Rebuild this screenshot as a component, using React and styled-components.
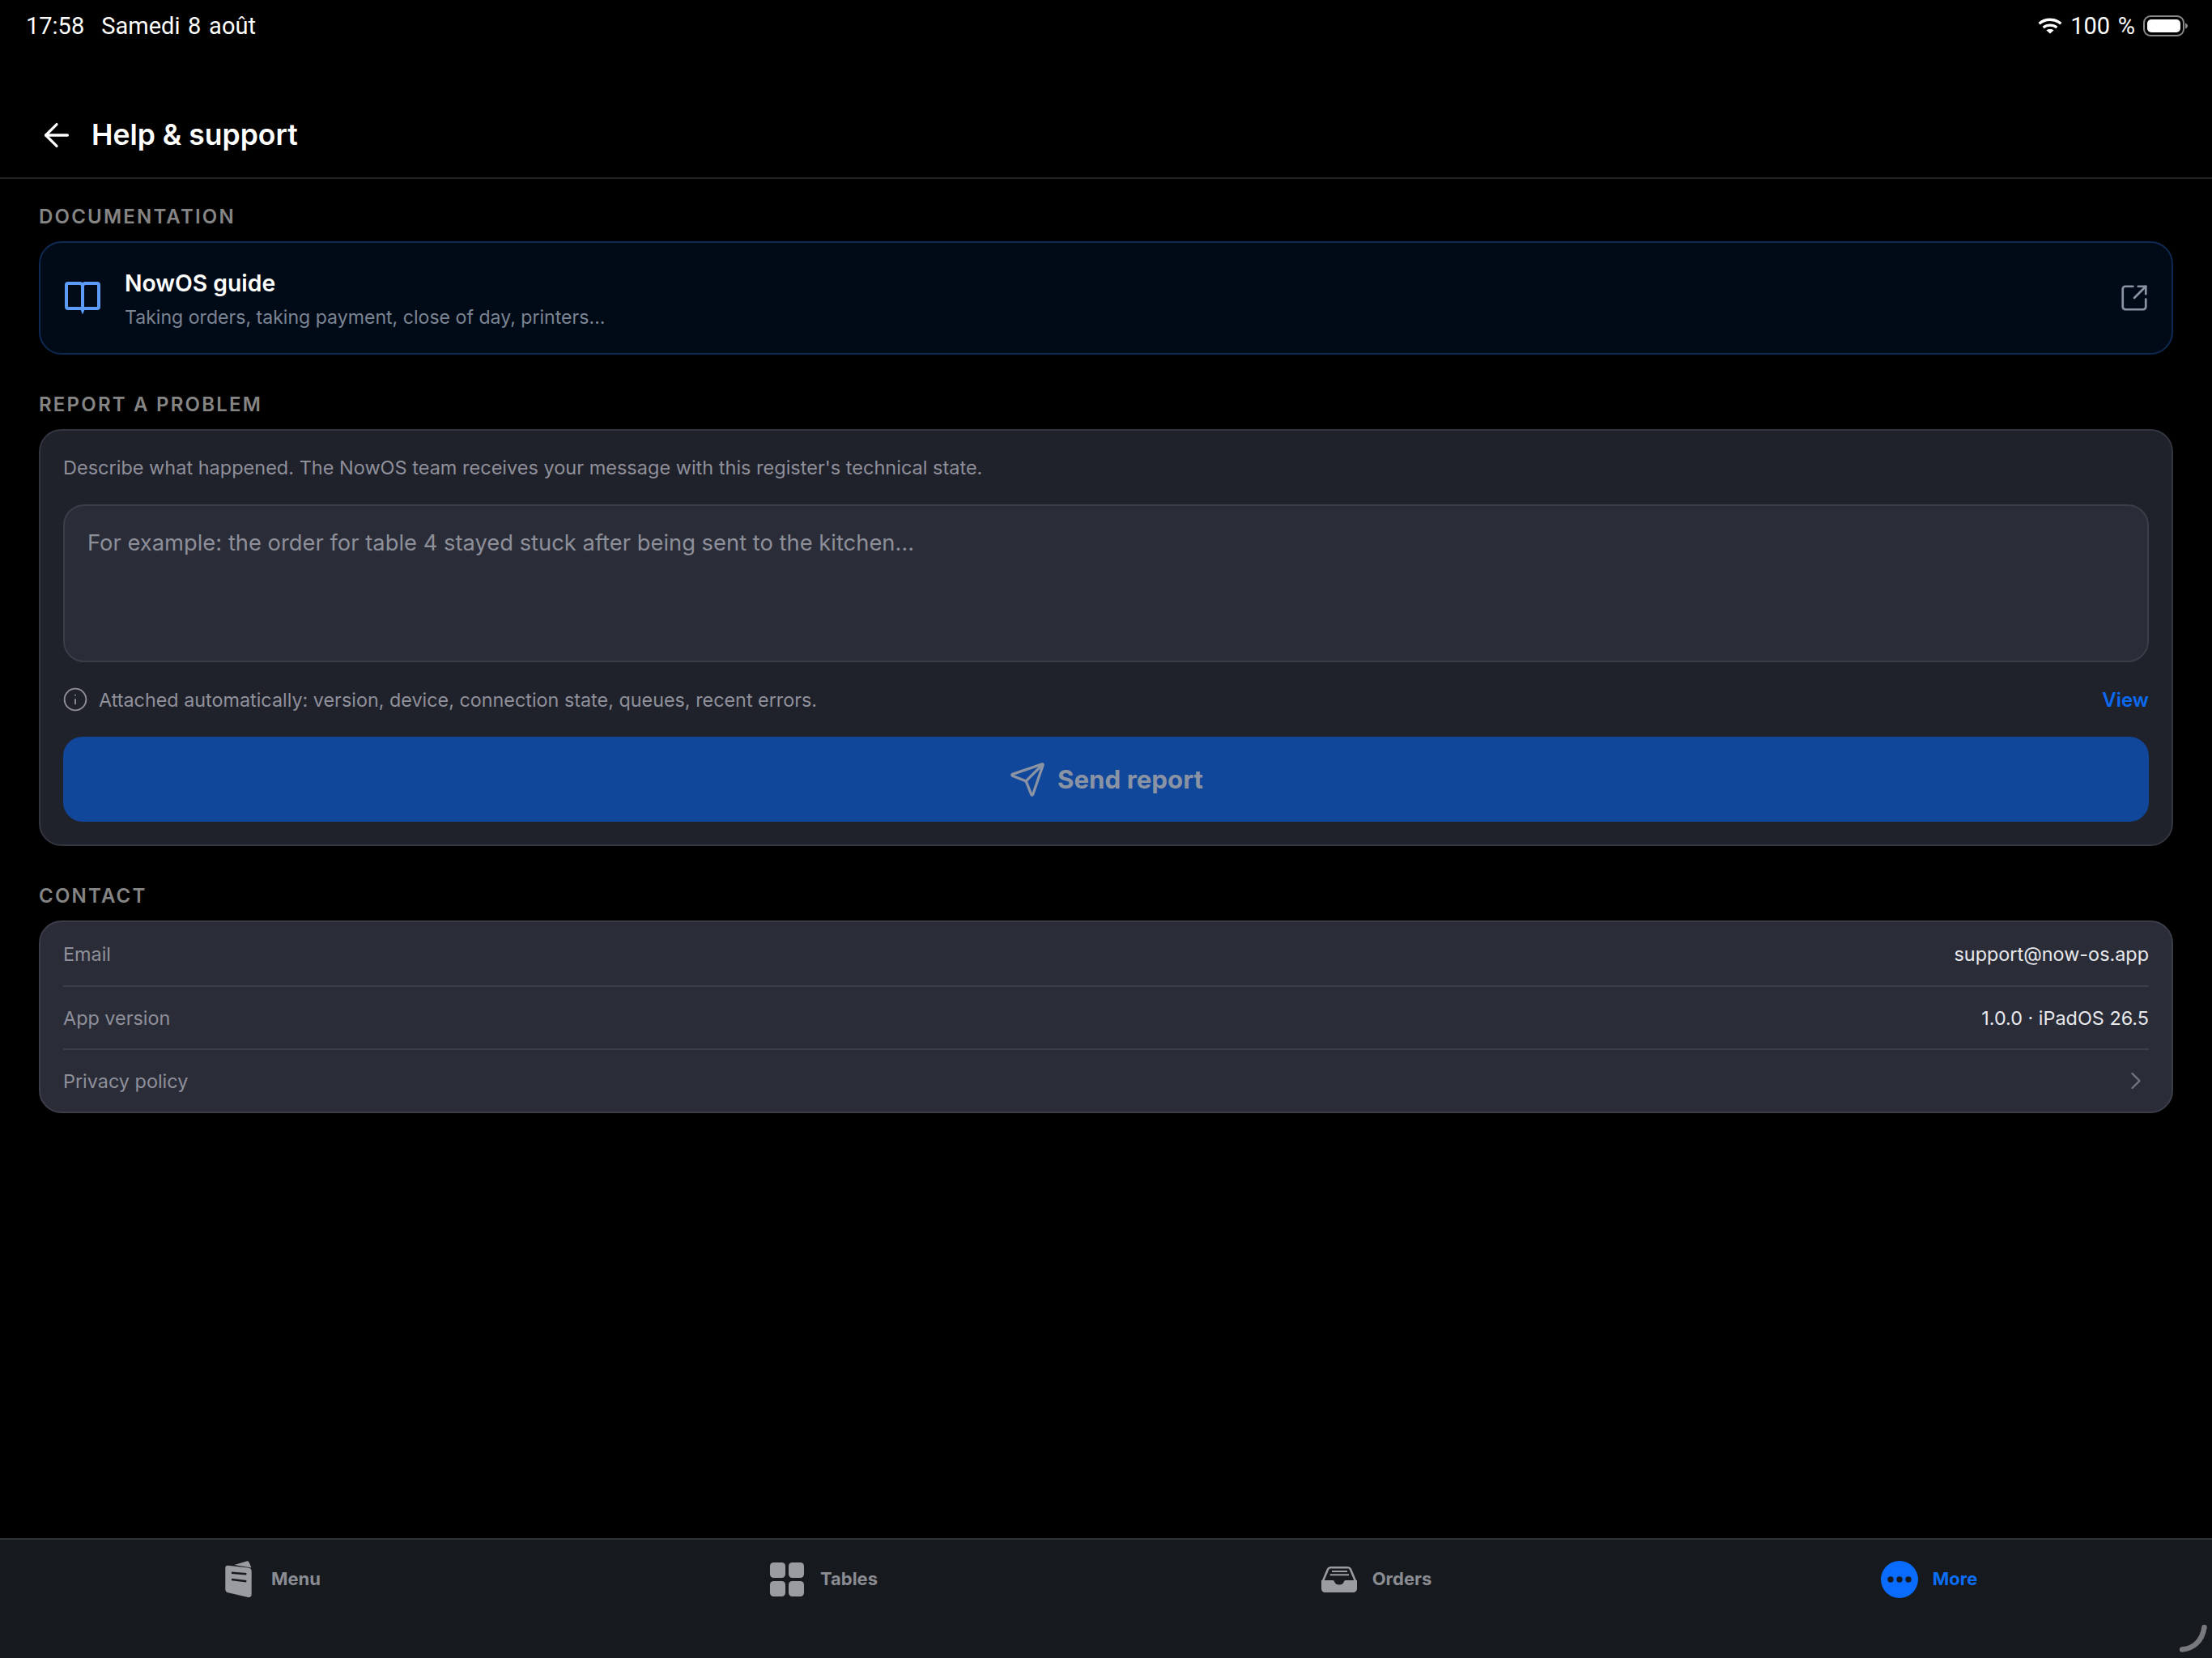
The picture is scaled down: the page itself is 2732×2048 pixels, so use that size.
import React from "react";
import styled, { createGlobalStyle } from "styled-components";
import { ArrowLeft, ChevronRight, Info, Send, SquareArrowOutUpRight } from "lucide-react";

const GlobalStyle = createGlobalStyle`
  html, body {
    margin: 0;
    padding: 0;
    background: #000;
  }
  * {
    box-sizing: border-box;
  }
`;

const Page = styled.div`
  position: relative;
  width: 2732px;
  height: 2048px;
  display: flex;
  flex-direction: column;
  background: #000;
  color: #fff;
  font-family: Inter, "Liberation Sans", sans-serif;
  overflow: hidden;
`;

const StatusBar = styled.div`
  height: 64px;
  padding: 0 30px 0 32px;
  display: flex;
  align-items: center;
  justify-content: space-between;
  font-size: 29px;
  font-family: Roboto, Inter, sans-serif;
`;

const StatusGroup = styled.div`
  display: flex;
  align-items: center;
  gap: ${(p) => p.$gap || 21}px;
  word-spacing: 2.5px;
`;

const Header = styled.header`
  height: 157px;
  padding: 50px 0 0 47px;
  display: flex;
  align-items: center;
  gap: 20px;
  border-bottom: 2px solid #232323;
`;

const Title = styled.h1`
  margin: 0;
  font-size: 35.5px;
  font-weight: 600;
`;

const Main = styled.main`
  flex: 1;
  padding: 32px 48px 0;
  display: flex;
  flex-direction: column;
  gap: 47px;
`;

const SectionLabel = styled.div`
  height: 30px;
  margin-bottom: 15px;
  line-height: 30px;
  font-size: 24px;
  font-weight: 600;
  letter-spacing: 2.2px;
  color: #858585;
`;

const GuideCard = styled.div`
  height: 140px;
  padding: 0 27px 0 28px;
  display: flex;
  align-items: center;
  background: #010b18;
  border: 2px solid #0e2a52;
  border-radius: 28px;
`;

const GuideText = styled.div`
  flex: 1;
  margin-left: 28px;
  padding-top: 4px;
  display: flex;
  flex-direction: column;
  gap: 9px;
`;

const GuideTitle = styled.div`
  font-size: 28.3px;
  line-height: 34px;
  font-weight: 600;
  color: #fff;
`;

const GuideSub = styled.div`
  font-size: 23.1px;
  line-height: 32px;
  color: #7b8493;
`;

const ReportCard = styled.div`
  padding: 28px;
  background: #1f212b;
  border: 2px solid #33353f;
  border-radius: 28px;
`;

const Description = styled.div`
  height: 36px;
  line-height: 36px;
  font-size: 23.5px;
  color: #8f909a;
`;

const MessageInput = styled.textarea`
  display: block;
  width: 100%;
  height: 195px;
  margin-top: 27px;
  padding: 28px;
  font-family: inherit;
  font-size: 27.35px;
  line-height: 36px;
  color: #fff;
  background: #2a2c38;
  border: 2px solid #3b3d49;
  border-radius: 26px;
  outline: none;
  resize: none;

  &::placeholder {
    color: #8d8f99;
    opacity: 1;
  }
`;

const AttachRow = styled.div`
  height: 36px;
  margin-top: 28px;
  display: flex;
  align-items: center;
  font-size: 23.35px;
  color: #8f909a;

  & > svg {
    margin: 0 13px 0 -1px;
  }
`;

const AttachText = styled.span`
  flex: 1;
`;

const ViewLink = styled.span`
  font-size: 24px;
  font-weight: 600;
  color: #0b6af0;
`;

const SendButton = styled.div`
  height: 105px;
  margin-top: 28px;
  display: flex;
  align-items: center;
  justify-content: center;
  gap: 14px;
  font-size: 31.3px;
  font-weight: 700;
  color: #8a93a3;
  background: #11479a;
  border-radius: 24px;
`;

const ContactCard = styled.div`
  padding: 0 28px;
  background: #2a2c38;
  border: 2px solid #3b3d49;
  border-radius: 28px;
`;

const ContactRow = styled.div`
  height: 78px;
  display: flex;
  align-items: center;
  justify-content: space-between;
  font-size: 23.4px;
  border-top: ${(p) => (p.$first ? "none" : "2px solid #3b3d49")};

  & > svg {
    margin-right: -2px;
    color: #73757f;
  }
`;

const ContactLabel = styled.span`
  color: #8f909a;
`;

const ContactValue = styled.span`
  color: #e8e9ec;
`;

const TabBar = styled.nav`
  height: 148px;
  display: grid;
  grid-template-columns: repeat(4, 1fr);
  align-items: start;
  padding-top: 26px;
  background: #16191e;
  border-top: 2px solid #2f3135;
`;

const Tab = styled.div`
  padding-right: 16px;
  display: flex;
  align-items: center;
  justify-content: center;
  gap: 18px;
  font-size: 22px;
  font-weight: 700;
  color: ${(p) => (p.$active ? "#0b6ef5" : "#8a8c92")};
`;

const TabIcon = styled.div`
  width: 46px;
  height: 46px;
  display: flex;
  align-items: center;
  justify-content: center;
  color: ${(p) => (p.$active ? "#0a6cff" : "#9b9ca2")};
`;

const TabLabel = styled.span`
  padding-bottom: 2px;
`;

const CornerGrip = styled.svg`
  position: absolute;
  right: 6px;
  bottom: 7px;
`;

function WifiIcon() {
  return (
    <svg width="30" height="20" viewBox="0 0 30 20" fill="none" stroke="#fff" strokeWidth="3.4">
      <path d="M1.6 7.2C9 .6 21 .6 28.4 7.2" />
      <path d="M6.6 12C11.5 8.2 18.500 8.200 23.400 12" />
      <path d="M15 19.600 10.400 15.400C13 13.600 17 13.600 19.600 15.400z" fill="#fff" stroke="none" />
    </svg>
  );
}

function BatteryIcon() {
  return (
    <svg width="55" height="26" viewBox="0 0 55 26">
      <rect x="1" y="1" width="49" height="24" rx="8" fill="none" stroke="#8a8a8a" strokeWidth="2" />
      <rect x="5" y="5" width="41" height="16" rx="5" fill="#fff" />
      <path d="M52 9.500c2 .6 3 2 3 3.500s-1 2.900-3 3.500z" fill="#8a8a8a" />
    </svg>
  );
}

function BookIcon() {
  return (
    <svg width="48" height="42" viewBox="0 0 48 42" fill="none" stroke="#5b9cf7" strokeWidth="4" strokeLinejoin="round">
      <path d="M24 6.500C24 4.300 22.500 3 20.500 3H6C4.800 3 4 3.800 4 5V32C4 33.200 4.800 34 6 34H42C43.200 34 44 33.200 44 32V5C44 3.800 43.200 3 42 3H27.500C25.500 3 24 4.300 24 6.500V36" />
      <path d="M21.300 35 24 41.500 26.700 35z" fill="#5b9cf7" stroke="none" />
    </svg>
  );
}

function MenuIcon() {
  return (
    <svg width="33" height="46" viewBox="0 0 33 46" fill="currentColor">
      <path d="M11.500 5 26.500 .4C28 0 29 .6 29.600 1.800L32.500 8.500z" />
      <path d="M3.500 5.800 28.500 8.500C31 8.800 32.700 10.300 32.700 12.800V41.500C32.700 44 31 45.400 28.500 44.900L3.700 39.200C1.500 38.700 .3 37.300 .3 35V9C.3 6.800 1.500 5.600 3.500 5.800z" />
      <path d="M8 14.700 26.300 16.300M8 23 26.300 25.300" stroke="#16191e" strokeWidth="2.500" fill="none" />
    </svg>
  );
}

function TablesIcon() {
  return (
    <svg width="42" height="42" viewBox="0 0 42 42" fill="currentColor">
      <rect width="19" height="19" rx="4.500" />
      <rect x="23" width="19" height="19" rx="4.500" />
      <rect y="23" width="19" height="19" rx="4.500" />
      <rect x="23" y="23" width="19" height="19" rx="4.500" />
    </svg>
  );
}

function OrdersIcon() {
  return (
    <svg width="44" height="32" viewBox="0 0 44 32" fill="currentColor">
      <path d="M1.500 19 8 3.500C8.800 1.800 10 1.300 12 1.300H32C34 1.300 35.200 1.800 36 3.500L42.500 19" fill="none" stroke="currentColor" strokeWidth="2.600" />
      <path d="M0 17H14C15.500 17 16 18 16.500 19.500 17.300 21.500 19 22.500 22 22.500S26.700 21.500 27.500 19.500C28 18 28.500 17 30 17H44V27C44 30 42 32 39 32H5C2 32 0 30 0 27z" />
      <path d="M13 6H32M10.700 10.300H34" stroke="currentColor" strokeWidth="2" fill="none" />
    </svg>
  );
}

function MoreIcon() {
  return (
    <svg width="46" height="46" viewBox="0 0 46 46">
      <circle cx="23" cy="23" r="23" fill="currentColor" />
      <circle cx="12" cy="23" r="3.700" fill="#16191e" />
      <circle cx="23" cy="23" r="3.700" fill="#16191e" />
      <circle cx="34" cy="23" r="3.700" fill="#16191e" />
    </svg>
  );
}

export default function App() {
  return (
    <Page>
      <GlobalStyle />
      <StatusBar>
        <StatusGroup>
          <span>17:58</span>
          <span>Samedi 8 août</span>
        </StatusGroup>
        <StatusGroup $gap={10}>
          <WifiIcon />
          <span>100 %</span>
          <BatteryIcon />
        </StatusGroup>
      </StatusBar>

      <Header>
        <ArrowLeft size={46} strokeWidth={1.7} />
        <Title>Help &amp; support</Title>
      </Header>

      <Main>
        <section>
          <SectionLabel>DOCUMENTATION</SectionLabel>
          <GuideCard>
            <BookIcon />
            <GuideText>
              <GuideTitle>NowOS guide</GuideTitle>
              <GuideSub>Taking orders, taking payment, close of day, printers…</GuideSub>
            </GuideText>
            <SquareArrowOutUpRight size={38} strokeWidth={1.7} color="#8a95a3" />
          </GuideCard>
        </section>

        <section>
          <SectionLabel>REPORT A PROBLEM</SectionLabel>
          <ReportCard>
            <Description>
              Describe what happened. The NowOS team receives your message with this register's technical state.
            </Description>
            <MessageInput placeholder="For example: the order for table 4 stayed stuck after being sent to the kitchen…" />
            <AttachRow>
              <Info size={32} strokeWidth={1.4} />
              <AttachText>Attached automatically: version, device, connection state, queues, recent errors.</AttachText>
              <ViewLink>View</ViewLink>
            </AttachRow>
            <SendButton>
              <Send size={46} strokeWidth={1.7} />
              Send report
            </SendButton>
          </ReportCard>
        </section>

        <section>
          <SectionLabel>CONTACT</SectionLabel>
          <ContactCard>
            <ContactRow $first>
              <ContactLabel>Email</ContactLabel>
              <ContactValue>support@now-os.app</ContactValue>
            </ContactRow>
            <ContactRow>
              <ContactLabel>App version</ContactLabel>
              <ContactValue>1.0.0 · iPadOS 26.5</ContactValue>
            </ContactRow>
            <ContactRow>
              <ContactLabel>Privacy policy</ContactLabel>
              <ChevronRight size={36} strokeWidth={1.6} />
            </ContactRow>
          </ContactCard>
        </section>
      </Main>

      <TabBar>
        <Tab>
          <TabIcon><MenuIcon /></TabIcon>
          <TabLabel>Menu</TabLabel>
        </Tab>
        <Tab>
          <TabIcon><TablesIcon /></TabIcon>
          <TabLabel>Tables</TabLabel>
        </Tab>
        <Tab>
          <TabIcon><OrdersIcon /></TabIcon>
          <TabLabel>Orders</TabLabel>
        </Tab>
        <Tab $active>
          <TabIcon $active><MoreIcon /></TabIcon>
          <TabLabel>More</TabLabel>
        </Tab>
      </TabBar>

      <CornerGrip width="34" height="34" viewBox="0 0 34 34" fill="none">
        <path d="M3 30.500C17 29.500 28 20 30.500 3" stroke="#77797c" strokeWidth="6.500" strokeLinecap="round" />
      </CornerGrip>
    </Page>
  );
}
